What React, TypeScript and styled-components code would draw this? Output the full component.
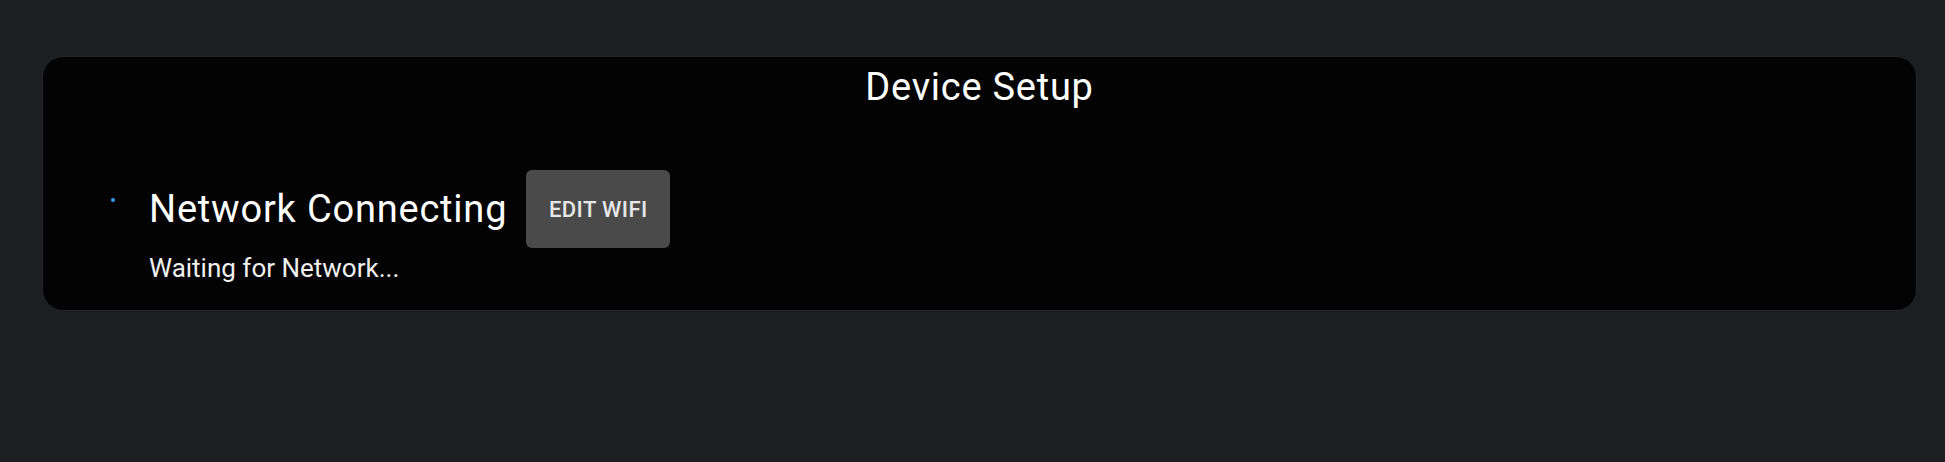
import styled, { createGlobalStyle } from 'styled-components';

const GlobalStyle = createGlobalStyle`
  html, body {
    margin: 0;
    padding: 0;
    background: #1d1e22;
    font-family: Roboto, 'Noto Sans', 'Liberation Sans', sans-serif;
    color: #fafafa;
  }
`;

const Page = styled.main`
  min-height: 462px;
  box-sizing: border-box;
  padding: 57px 29px 0 43px;
`;

const Card = styled.section`
  display: flex;
  flex-direction: column;
  height: 253px;
  box-sizing: border-box;
  padding: 8px 0 0 68px;
  background: #030303;
  border-radius: 20px;
  box-shadow: 0 0 0 1px rgba(255, 255, 255, 0.03);
`;

const Title = styled.h1`
  margin: 0 0 61px -68px;
  font-size: 38px;
  font-weight: 400;
  letter-spacing: 0.75px;
  line-height: normal;
  text-align: center;
  color: #ffffff;
`;

const StatusRow = styled.div`
  display: flex;
  align-items: flex-start;
  gap: 34px;
`;

const Spinner = styled.span`
  width: 4px;
  height: 4px;
  margin-top: 28px;
  border-radius: 50%;
  background: #2f9bf0;
  flex-shrink: 0;
`;

const StatusBody = styled.div`
  display: flex;
  flex-direction: column;
  gap: 5px;
`;

const HeadLine = styled.div`
  display: flex;
  align-items: center;
  gap: 19px;
`;

const Heading = styled.h2`
  margin: 0;
  font-size: 38px;
  font-weight: 400;
  letter-spacing: 0.8px;
  line-height: normal;
  color: #ffffff;
`;

const ActionButton = styled.button`
  width: 144px;
  height: 78px;
  border: none;
  border-radius: 6px;
  background: #4a4a4a;
  color: #e6e6e6;
  font-family: inherit;
  font-size: 22px;
  font-weight: 500;
  letter-spacing: 0.4px;
  text-transform: uppercase;
  cursor: pointer;
`;

const Subtitle = styled.p`
  margin: 0;
  font-size: 26px;
  line-height: normal;
  color: #f0f0f0;
`;

export default function App() {
  return (
    <>
      <GlobalStyle />
      <Page>
        <Card>
          <Title>Device Setup</Title>
          <StatusRow>
            <Spinner />
            <StatusBody>
              <HeadLine>
                <Heading>Network Connecting</Heading>
                <ActionButton>Edit WiFi</ActionButton>
              </HeadLine>
              <Subtitle>Waiting for Network...</Subtitle>
            </StatusBody>
          </StatusRow>
        </Card>
      </Page>
    </>
  );
}
